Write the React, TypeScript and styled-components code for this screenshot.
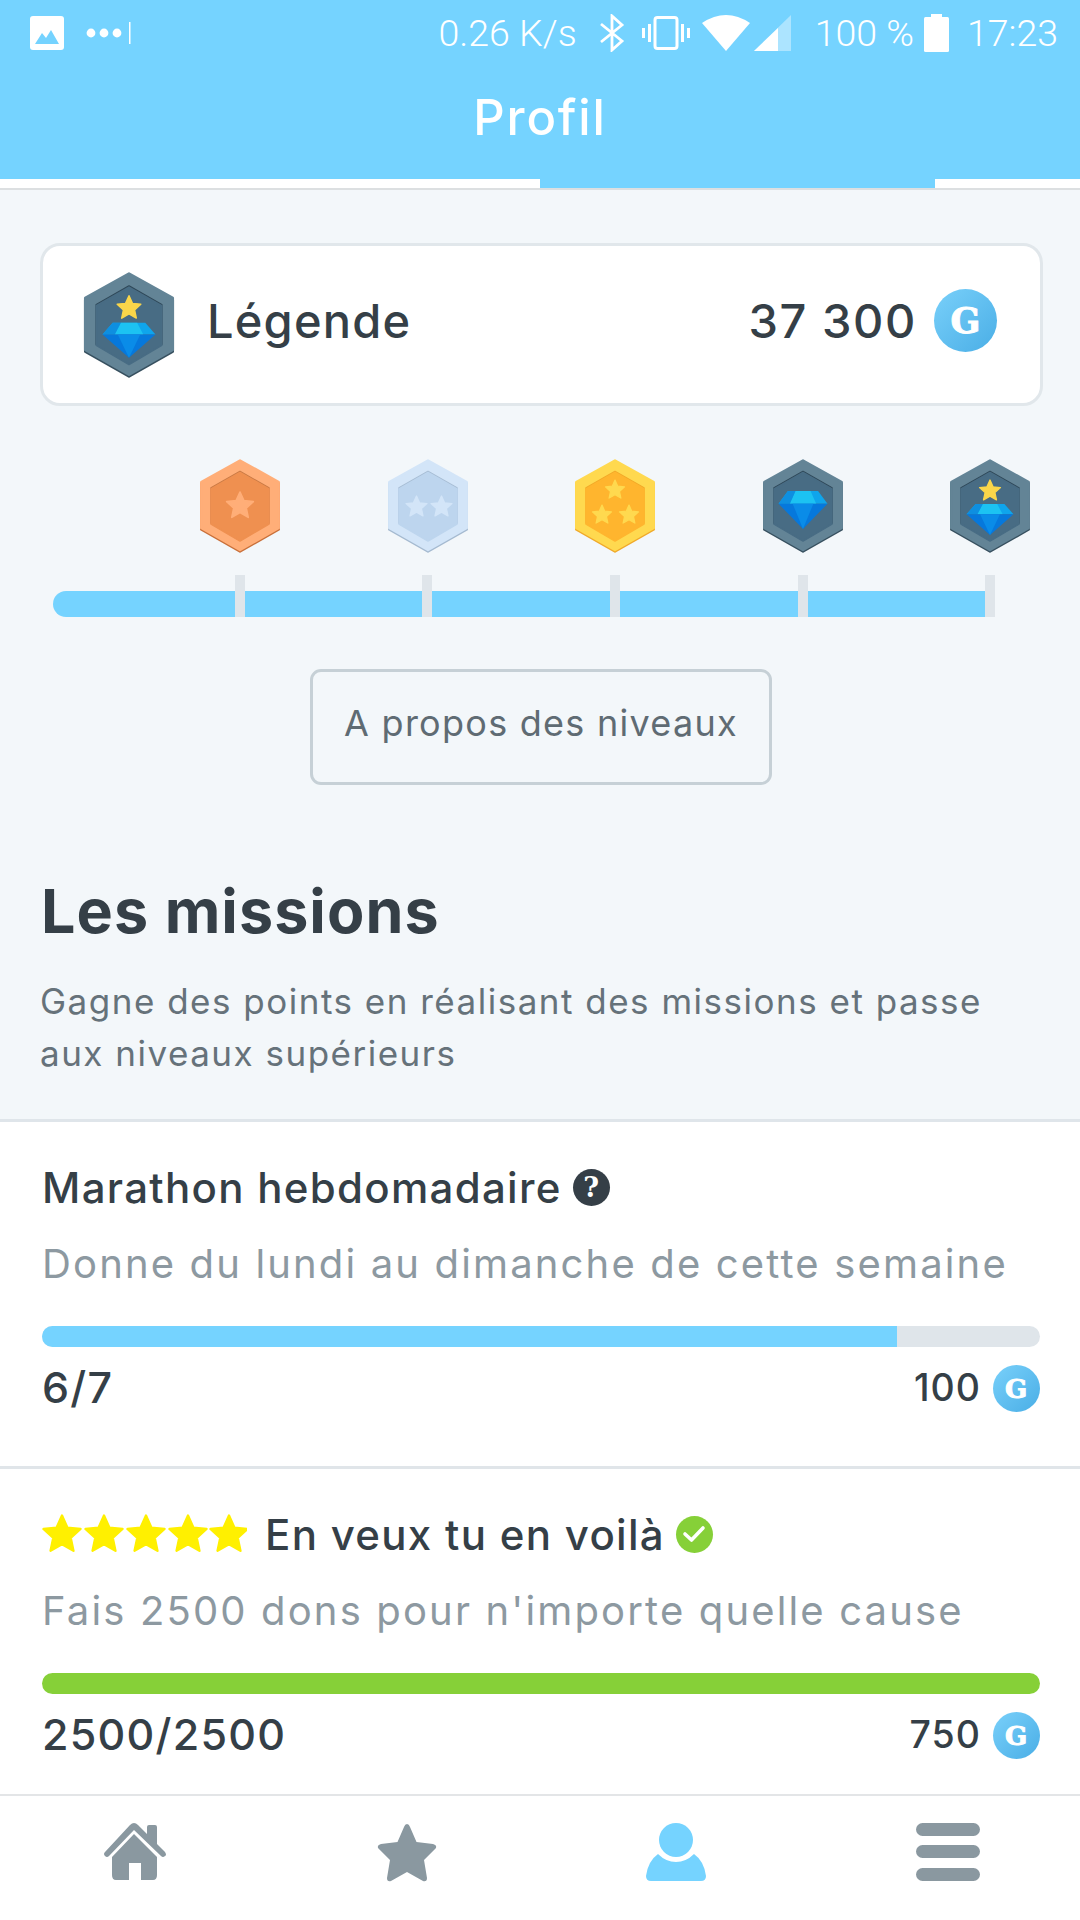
import React from "react";
import styled, { createGlobalStyle } from "styled-components";

const Global = createGlobalStyle`
  html, body { margin: 0; padding: 0; background: #f3f7fa; }
  * { box-sizing: border-box; }
  body { font-family: Inter, Lato, sans-serif; }
`;

const Page = styled.div`
  width: 1080px; height: 1920px; display: flex; flex-direction: column;
  background: #f3f7fa; overflow: hidden; color: #353f47;
`;
const Header = styled.header`
  height: 179px; background: #75d3ff; display: flex; flex-direction: column; flex: none;
`;
const StatusBar = styled.div`
  height: 66px; display: flex; align-items: center; justify-content: space-between;
  padding: 0 22px 0 30px; color: #fff;
  font-family: Roboto, sans-serif; font-weight: 300; font-size: 37.5px;
`;
const StatusGroup = styled.div`
  display: flex; align-items: center;
`;
const StatusText = styled.span<{ $ml: number }>`
  margin-left: ${p => p.$ml}px; line-height: 40px;
`;
const StatusIcon = styled.svg<{ $ml: number }>`
  margin-left: ${p => p.$ml}px; display: block; flex: none;
`;
const Title = styled.h1`
  margin: 24px 0 0; text-align: center; color: #fff; font-size: 49px; font-weight: 500;
  line-height: 56px; letter-spacing: 1.8px;
`;
const TabStrip = styled.div`
  height: 11px; flex: none; display: grid; grid-template-columns: 540px 395px 1fr;
  background: #fff; border-bottom: 2px solid #dcdfe1;
`;
const ActiveTab = styled.div`
  grid-column: 2; background: #75d3ff; height: 9px;
`;
const Intro = styled.section`
  flex: none; padding: 53px 37px 39px 40px;
`;
const LevelCard = styled.div`
  height: 163px; background: #fff; border: 3px solid #e1e7eb; border-radius: 20px;
  display: flex; align-items: center; padding: 0 43px 0 40px;
`;
const LevelName = styled.span`
  font-size: 47px; font-weight: 500; margin: 0 0 8px 32px; letter-spacing: 1.2px; flex: 1;
`;
const Points = styled.span`
  font-size: 47px; font-weight: 500; letter-spacing: 1.6px; margin: 0 17px 8px 0;
`;
const Coin = styled.span<{ $size: number; $lift?: number }>`
  width: ${p => p.$size}px; height: ${p => p.$size}px; border-radius: 50%; flex: none;
  margin-bottom: ${p => p.$lift ?? 0}px;
  background: linear-gradient(135deg, #79d0fa, #4aaee6);
  color: #fff; display: flex; align-items: center; justify-content: center;
  font-family: "DejaVu Serif", serif; font-weight: 700;
  font-size: ${p => Math.round(p.$size * 0.56)}px; line-height: 1;
  -webkit-text-stroke: 1px #fff;
`;
const MedalRow = styled.div`
  display: flex; gap: 107.5px; margin: 53px 0 0 160px;
`;
const Track = styled.div`
  display: flex; align-items: flex-end; height: 42px; margin: 22px 0 0 13px;
`;
const Segment = styled.div<{ $w: number; $first?: boolean }>`
  width: ${p => p.$w}px; height: 26px; background: #75d3ff;
  border-radius: ${p => (p.$first ? "13px 0 0 13px" : "0")};
`;
const Tick = styled.div`
  width: 10px; height: 42px; background: #dfe5ea; flex: none;
`;
const AboutButton = styled.button`
  display: block; width: 462px; height: 116px; margin: 52px 0 0 270px; padding: 0 0 8px;
  background: transparent; border: 3px solid #c6d0d6; border-radius: 11px;
  color: #5f6b73; font-family: inherit; font-size: 36px; font-weight: 400; letter-spacing: 1.27px;
`;
const Heading = styled.h2`
  margin: 90px 0 0 1px; font-size: 61px; line-height: 72px; font-weight: 700; letter-spacing: 1.05px;
`;
const Lead = styled.p`
  margin: 28px 0 0 0; padding-bottom: 1px; font-size: 35px; line-height: 52px; color: #66727a; letter-spacing: 1.5px;
  white-space: nowrap;
`;
const MissionList = styled.div`
  flex: 1; min-height: 0; overflow: hidden; background: #fff; border-top: 3px solid #dfe5ea;
`;
const Mission = styled.article`
  padding: 44px 40px 54px 42px; border-bottom: 3px solid #e0e5e9;
`;
const MissionTitle = styled.div`
  display: flex; align-items: center; height: 46px; padding-bottom: 4px;
  font-size: 42px; font-weight: 500; letter-spacing: 1.3px;
`;
const Stars = styled.svg`
  display: block; margin-right: 18px; flex: none;
`;
const Badge = styled.span<{ $bg: string }>`
  width: 37px; height: 37px; border-radius: 50%; background: ${p => p.$bg}; color: #fff;
  margin-left: 11px; display: flex; align-items: center; justify-content: center; flex: none;
  font-family: "DejaVu Serif", serif; font-size: 27px; font-weight: 700; line-height: 1;
  letter-spacing: 0;
`;
const MissionDesc = styled.p`
  margin: 29px 0 0; height: 46px; line-height: 46px; font-size: 40px; color: #8d99a1; letter-spacing: 2.15px;
  white-space: nowrap;
`;
const Bar = styled.div`
  margin-top: 39px; height: 21px; border-radius: 11px; background: #dfe5ea; overflow: hidden;
`;
const BarFill = styled.div<{ $color: string }>`
  height: 100%; background: ${p => p.$color};
`;
const MissionFoot = styled.div`
  margin-top: 18px; height: 47px; display: flex; align-items: center; justify-content: space-between;
`;
const Progress = styled.span`
  font-size: 43px; font-weight: 500; letter-spacing: 1.25px; margin-bottom: 4px;
`;
const Reward = styled.span`
  display: flex; align-items: center; gap: 12px;
  font-size: 37.5px; font-weight: 500; letter-spacing: 1px;
`;
const RewardValue = styled.span`
  margin-bottom: 2px;
`;
const Nav = styled.nav`
  height: 126px; flex: none; background: #fff; border-top: 2px solid #e3e5e7;
  display: flex; justify-content: space-between; align-items: flex-start;
  padding: 27px 100px 0 103px;
`;

const starPts = (cx: number, cy: number, R: number) => {
  const p: string[] = [];
  for (let i = 0; i < 10; i++) {
    const r = i % 2 === 0 ? R : R * 0.47;
    const a = -Math.PI / 2 + (i * Math.PI) / 5;
    p.push(`${(cx + r * Math.cos(a)).toFixed(2)},${(cy + r * Math.sin(a)).toFixed(2)}`);
  }
  return p.join(" ");
};

const Star = ({ cx, cy, r, fill }: { cx: number; cy: number; r: number; fill: string }) => (
  <polygon points={starPts(cx, cy, r)} fill={fill} stroke={fill} strokeWidth={r * 0.12} strokeLinejoin="round" />
);

const Diamond = ({ cx, top, w, h }: { cx: number; top: number; w: number; h: number }) => {
  const X = (v: number) => cx + (v * w) / 52;
  const Y = (v: number) => top + (v * h) / 39;
  const pts = (a: number[][]) => a.map(([x, y]) => `${X(x)},${Y(y)}`).join(" ");
  return (
    <g>
      <polygon points={pts([[-16, 0], [16, 0], [26, 13], [-26, 13]])} fill="#0fa5ec" />
      <polygon points={pts([[-8, 0], [8, 0], [14, 13], [-14, 13]])} fill="#1cc2f2" />
      <polygon points={pts([[-16, 0], [-8, 0], [-14, 13], [-26, 13]])} fill="#0e8fe0" />
      <polygon points={pts([[-26, 13], [26, 13], [0, 39]])} fill="#0678dc" />
      <polygon points={pts([[-11, 13], [11, 13], [0, 39]])} fill="#0a8ce8" />
    </g>
  );
};

type Pal = { edge: string; outer: string; rim: string; inner: string };
const HEX_O = "40,1.5 78.7,23 78.7,69 40,91 1.3,69 1.3,23";
const HEX_I = "40,13.5 69,30 69,65 40,82 11,65 11,30";

const Medal = ({ pal, w, h, children }: { pal: Pal; w: number; h: number; children?: React.ReactNode }) => (
  <svg width={w} height={h} viewBox="0 0 80 94" style={{ display: "block", flex: "none" }}>
    <polygon points={HEX_O} transform="translate(0 1.5)" fill={pal.edge} stroke={pal.edge} strokeWidth="2.5" strokeLinejoin="round" />
    <polygon points={HEX_O} fill={pal.outer} stroke={pal.outer} strokeWidth="2.5" strokeLinejoin="round" />
    <polygon points={HEX_I} transform="translate(0 -1)" fill={pal.rim} stroke={pal.rim} strokeWidth="1.5" strokeLinejoin="round" />
    <polygon points={HEX_I} fill={pal.inner} stroke={pal.inner} strokeWidth="1.5" strokeLinejoin="round" />
    {children}
  </svg>
);

const SLATE: Pal = { edge: "#37505f", outer: "#638496", rim: "#2f4858", inner: "#486c84" };
const Legend = () => (
  <>
    <Star cx={40} cy={32} r={11} fill="#fad64a" />
    <Diamond cx={40} top={45} w={47} h={31} />
  </>
);

const medals = [
  <Medal key="b" w={80} h={94} pal={{ edge: "#c9703a", outer: "#ffae78", rim: "#c97a45", inner: "#ef9050" }}>
    <Star cx={40} cy={47} r={14} fill="#ffae78" />
  </Medal>,
  <Medal key="s" w={80} h={94} pal={{ edge: "#a5bad0", outer: "#d3e5f8", rim: "#a7bdd4", inner: "#bdd5ee" }}>
    <Star cx={28.5} cy={48} r={11} fill="#d3e5f8" />
    <Star cx={53.5} cy={48} r={11} fill="#d3e5f8" />
  </Medal>,
  <Medal key="g" w={80} h={94} pal={{ edge: "#f0a92a", outer: "#ffd94f", rim: "#f2a928", inner: "#ffb52e" }}>
    <Star cx={40} cy={31} r={10} fill="#ffd94f" />
    <Star cx={27} cy={56} r={10} fill="#ffd94f" />
    <Star cx={54} cy={56} r={10} fill="#ffd94f" />
  </Medal>,
  <Medal key="d" w={80} h={94} pal={SLATE}>
    <Diamond cx={40} top={32} w={49} h={38} />
  </Medal>,
  <Medal key="l" w={80} h={94} pal={SLATE}>
    <Legend />
  </Medal>,
];

const segments = [182, 177, 178, 178, 177];

const App = () => (
  <Page>
    <Global />
    <Header>
      <StatusBar>
        <StatusGroup>
          <StatusIcon $ml={0} width="34" height="34" viewBox="0 0 34 34">
            <rect x="0" y="0" width="34" height="34" rx="3" fill="#fff" />
            <polygon points="5,28 12,17 16,22 21,14 29,28" fill="#75d3ff" />
          </StatusIcon>
          <StatusIcon $ml={22} width="46" height="24" viewBox="0 0 46 24">
            <circle cx="5" cy="12" r="4.4" fill="#fff" />
            <circle cx="18" cy="12" r="4.4" fill="#fff" />
            <circle cx="31" cy="12" r="4.4" fill="#fff" />
            <rect x="43" y="1" width="1.5" height="22" fill="#fff" />
          </StatusIcon>
        </StatusGroup>
        <StatusGroup>
          <StatusText $ml={0}>0.26 K/s</StatusText>
          <StatusIcon $ml={22} width="26" height="38" viewBox="0 0 26 38">
            <path d="M2 10 L23 27 L13 36 L13 2 L23 11 L2 28" fill="none" stroke="#fff" strokeWidth="2.8" />
          </StatusIcon>
          <StatusIcon $ml={17} width="48" height="34" viewBox="0 0 48 34">
            <rect x="13" y="1.5" width="22" height="31" rx="2.5" fill="none" stroke="#fff" strokeWidth="3" />
            <rect x="6" y="8" width="3" height="18" fill="#fff" />
            <rect x="0" y="12" width="3" height="10" fill="#fff" />
            <rect x="39" y="8" width="3" height="18" fill="#fff" />
            <rect x="45" y="12" width="3" height="10" fill="#fff" />
          </StatusIcon>
          <StatusIcon $ml={12} width="48" height="36" viewBox="0 0 48 36">
            <path d="M0 8 Q24 -8 48 8 L24 36 Z" fill="#fff" />
          </StatusIcon>
          <StatusIcon $ml={4} width="37" height="36" viewBox="0 0 37 36">
            <polygon points="37,0 37,36 0,36" fill="#fff" fillOpacity="0.4" />
            <polygon points="24,13 24,36 0,36" fill="#fff" />
          </StatusIcon>
          <StatusText $ml={24}>100 %</StatusText>
          <StatusIcon $ml={10} width="25" height="38" viewBox="0 0 25 38">
            <rect x="7" y="0" width="11" height="4" fill="#fff" />
            <rect x="0" y="3" width="25" height="35" rx="1.5" fill="#fff" />
          </StatusIcon>
          <StatusText $ml={18}>17:23</StatusText>
        </StatusGroup>
      </StatusBar>
      <Title>Profil</Title>
    </Header>
    <TabStrip>
      <ActiveTab />
    </TabStrip>
    <Intro>
      <LevelCard>
        <Medal w={92} h={106} pal={SLATE}>
          <Legend />
        </Medal>
        <LevelName>Légende</LevelName>
        <Points>37 300</Points>
        <Coin $size={63} $lift={8}>G</Coin>
      </LevelCard>
      <MedalRow>{medals}</MedalRow>
      <Track>
        {segments.map((w, i) => (
          <React.Fragment key={i}>
            <Segment $w={w} $first={i === 0} />
            <Tick />
          </React.Fragment>
        ))}
      </Track>
      <AboutButton>A propos des niveaux</AboutButton>
      <Heading>Les missions</Heading>
      <Lead>
        Gagne des points en réalisant des missions et passe
        <br />
        aux niveaux supérieurs
      </Lead>
    </Intro>
    <MissionList>
      <Mission>
        <MissionTitle>
          Marathon hebdomadaire
          <Badge $bg="#353f47">?</Badge>
        </MissionTitle>
        <MissionDesc>Donne du lundi au dimanche de cette semaine</MissionDesc>
        <Bar>
          <BarFill $color="#75d3ff" style={{ width: `${(855 / 998) * 100}%` }} />
        </Bar>
        <MissionFoot>
          <Progress>6/7</Progress>
          <Reward>
            <RewardValue>100</RewardValue>
            <Coin $size={47}>G</Coin>
          </Reward>
        </MissionFoot>
      </Mission>
      <Mission>
        <MissionTitle>
          <Stars width="205" height="40" viewBox="0 0 205 40">
            {[20, 62, 104, 146, 187].map(cx => (
              <Star key={cx} cx={cx} cy={21} r={19.5} fill="#fff000" />
            ))}
          </Stars>
          En veux tu en voilà
          <Badge $bg="#86d038">
            <svg width="24" height="20" viewBox="0 0 24 20">
              <path d="M3 10 L9.5 16 L21 4" fill="none" stroke="#fff" strokeWidth="3.6" strokeLinecap="round" strokeLinejoin="round" />
            </svg>
          </Badge>
        </MissionTitle>
        <MissionDesc>Fais 2500 dons pour n'importe quelle cause</MissionDesc>
        <Bar>
          <BarFill $color="#86d038" style={{ width: "100%" }} />
        </Bar>
        <MissionFoot>
          <Progress>2500/2500</Progress>
          <Reward>
            <RewardValue>750</RewardValue>
            <Coin $size={47}>G</Coin>
          </Reward>
        </MissionFoot>
      </Mission>
    </MissionList>
    <Nav>
      <svg width="64" height="57" viewBox="0 0 64 57">
        <path d="M31 0 Q33 0 35 2 L44 11 V4 Q44 2 46 2 H52 Q54 2 54 4 V21 L62 29 Q64 32 62 33 Q60 35 58 33 L31 7 L6 33 Q4 35 2 33 Q0 31 2 29 L27 2 Q29 0 31 0 Z" fill="#8a98a0" />
        <path d="M31 11 L54 34 V52 Q54 57 50 57 H38 V40 H26 V57 H13 Q9 57 9 52 V34 Z" fill="#8a98a0" />
      </svg>
      <svg width="60" height="60" viewBox="0 0 60 60">
        <path d="M30 1 Q32 1 33 4 L39.5 19 L56 21 Q60 22 59 25 L47 37 L50 55 Q50 59 46 58 L30 49 L14 58 Q10 59 10 55 L13 37 L1 25 Q0 22 4 21 L20.5 19 L27 4 Q28 1 30 1 Z" fill="#8a98a0" />
      </svg>
      <svg width="60" height="58" viewBox="0 0 60 58">
        <ellipse cx="30" cy="17" rx="17" ry="17" fill="#75d3ff" />
        <path d="M12 31 Q20 39 30 39 Q40 39 48 31 Q58 38 60 53 Q60 58 55 58 H5 Q0 58 0 53 Q2 38 12 31 Z" fill="#75d3ff" />
      </svg>
      <svg width="64" height="58" viewBox="0 0 64 58">
        <rect x="0" y="0" width="64" height="13" rx="6.5" fill="#8a98a0" />
        <rect x="0" y="22" width="64" height="13" rx="6.5" fill="#8a98a0" />
        <rect x="0" y="45" width="64" height="13" rx="6.5" fill="#8a98a0" />
      </svg>
    </Nav>
  </Page>
);

export default App;
